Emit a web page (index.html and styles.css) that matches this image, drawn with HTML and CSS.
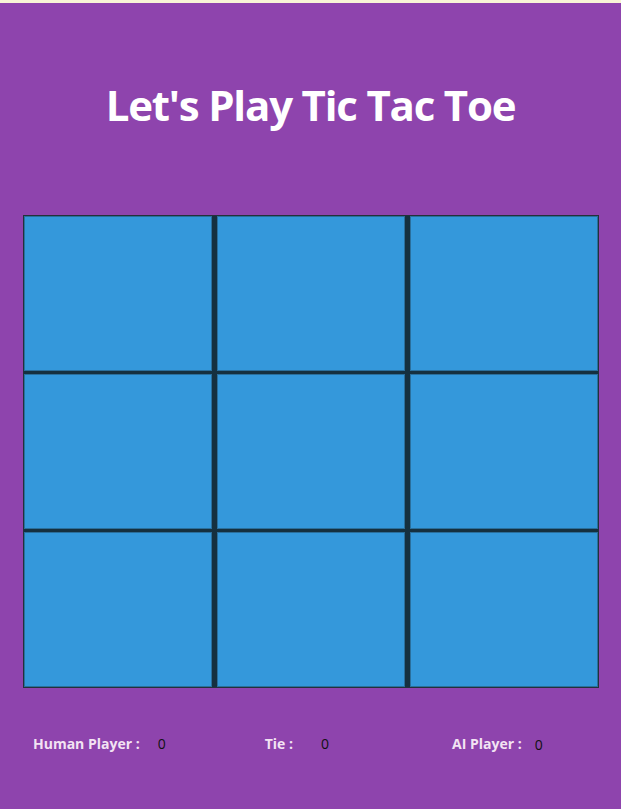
FILE: index.html
```html
<!DOCTYPE html>
<html>
<head>
<meta charset="utf-8">
<title>Tic Tac Toe</title>
<link rel="stylesheet" href="styles.css">
</head>
<body>
<div class="topline"></div>
<main class="app">
  <h1 class="title">Let's Play Tic Tac Toe</h1>
  <div class="board">
    <div class="cell"></div><div class="cell"></div><div class="cell"></div>
    <div class="cell"></div><div class="cell"></div><div class="cell"></div>
    <div class="cell"></div><div class="cell"></div><div class="cell"></div>
  </div>
  <div class="scores">
    <div class="score score-human"><span class="label">Human Player :</span><span class="value">0</span></div>
    <div class="score score-tie"><span class="label">Tie :</span><span class="value">0</span></div>
    <div class="score score-ai"><span class="label">AI Player :</span><span class="value value-ai">0</span></div>
  </div>
</main>
</body>
</html>
```
FILE: styles.css
```css
html, body {
  margin: 0;
  padding: 0;
}
body {
  background: #8e44ad;
  width: 621px;
  height: 809px;
  overflow: hidden;
  font-family: "Open Sans", "Noto Sans", sans-serif;
}
.topline {
  height: 3px;
  background: #f8f5d6;
}
.app {
  display: flex;
  flex-direction: column;
}
.title {
  margin: 74px 0 0 0;
  height: 56px;
  line-height: 56px;
  text-align: center;
  color: #ffffff;
  font-size: 42px;
  font-weight: 700;
  letter-spacing: -1.2px;
}
.board {
  margin: 82px 0 0 23px;
  width: 574px;
  display: grid;
  grid-template-columns: repeat(3, 188px);
  grid-template-rows: repeat(3, 155px);
  column-gap: 5px;
  row-gap: 3px;
  background: #15303f;
  border: 1px solid #23313b;
}
.cell {
  background: #3498db;
  box-shadow: inset 0 0 0 1px #2a6f9c;
}
.scores {
  display: flex;
  align-items: baseline;
  margin-top: 46px;
  padding-left: 33px;
  font-size: 14px;
}
.score {
  display: flex;
  align-items: baseline;
}
.label {
  color: #f3e3f3;
  font-weight: 700;
}
.value {
  color: #111111;
  font-weight: 400;
}
.score-human .value { margin-left: 18px; }
.score-tie { margin-left: 99px; }
.score-tie .value { margin-left: 28px; }
.score-ai { margin-left: 123px; }
.score-ai .value { margin-left: 13px; position: relative; top: 1px; }
```
